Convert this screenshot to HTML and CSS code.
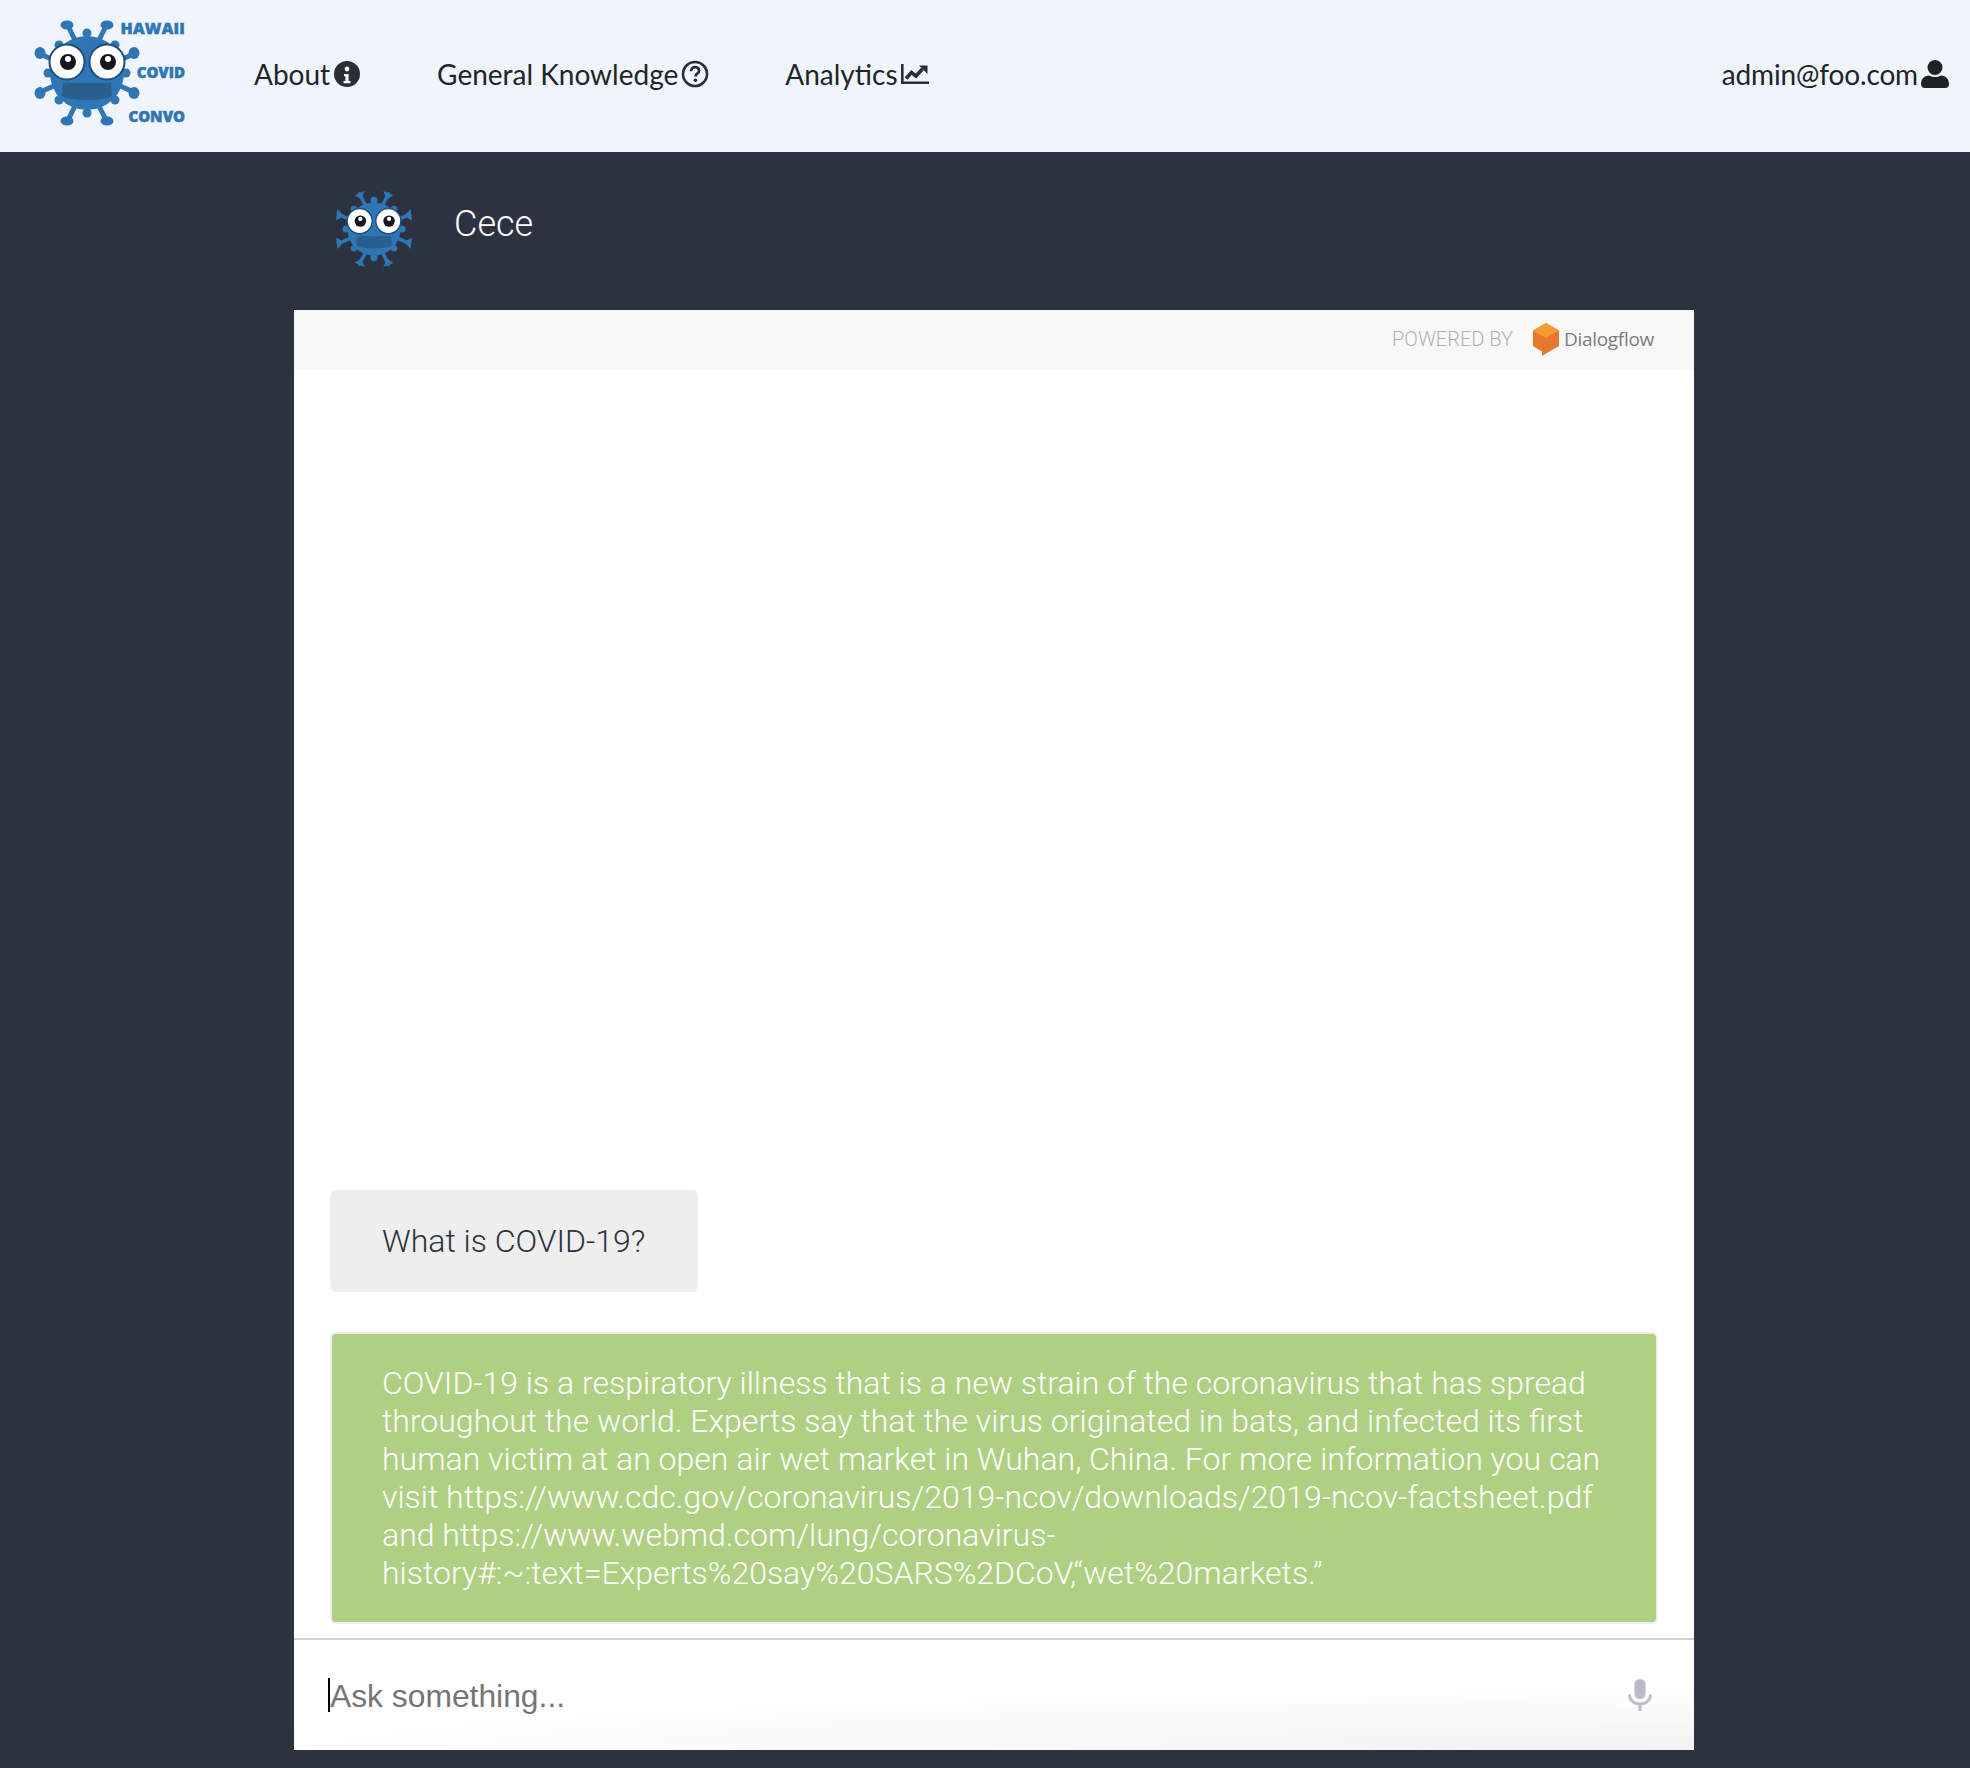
FILE: index.html
```html
<!DOCTYPE html>
<html lang="en">
<head>
<meta charset="utf-8">
<title>Hawaii COVID Convo</title>
<link rel="stylesheet" href="styles.css">
</head>
<body>
<svg class="defs" width="0" height="0" aria-hidden="true">
  <defs>
    <g id="virus-face">
      <circle cx="53" cy="53" r="37" fill="#2f76b5"/>
      <circle cx="33" cy="42" r="17.500" fill="#fff" stroke="#1d4f78" stroke-width="2"/>
      <circle cx="73" cy="42" r="17.500" fill="#fff" stroke="#1d4f78" stroke-width="2"/>
      <circle cx="34" cy="42" r="8" fill="#15171c"/>
      <circle cx="74" cy="42" r="8" fill="#15171c"/>
      <circle cx="34" cy="39" r="3" fill="#fff"/>
      <circle cx="74" cy="39" r="3" fill="#fff"/>
      <path d="M29 63 77 63 78 76Q72 80 53 80T28 76z" fill="#2a5f8c"/>
    </g>
    <g id="virus-arms" stroke="#2f76b5" stroke-width="5" fill="none" stroke-linecap="round">
      <path d="M33 4 43 24M73 4 63 24M53 13V24M4 33 22 41M102 33 84 41M4 73 22 65M102 73 84 65M33 102 43 82M73 102 63 82M53 93V82M14 53H20M92 53H86M25 25 30 30M81 25 76 30M25 80 30 76M81 80 76 76"/>
    </g>
    <symbol id="virus-round" viewBox="0 0 106 106">
      <use href="#virus-arms"/>
      <g fill="#2f76b5">
        <ellipse cx="33" cy="5" rx="6.500" ry="4.500"/><ellipse cx="73" cy="5" rx="6.500" ry="4.500"/>
        <circle cx="53" cy="13" r="4.500"/><ellipse cx="6" cy="33" rx="5.500" ry="6"/><ellipse cx="100" cy="33" rx="5.500" ry="6"/>
        <ellipse cx="6" cy="73" rx="5.500" ry="6"/><ellipse cx="100" cy="73" rx="5.500" ry="6"/><ellipse cx="33" cy="101" rx="6.500" ry="4.500"/>
        <ellipse cx="73" cy="101" rx="6.500" ry="4.500"/><circle cx="53" cy="93" r="4.500"/><circle cx="14" cy="53" r="4.500"/>
        <circle cx="92" cy="53" r="4.500"/><circle cx="25" cy="25" r="4.500"/><circle cx="81" cy="25" r="4.500"/>
        <circle cx="25" cy="80" r="4.500"/><circle cx="81" cy="80" r="4.500"/>
      </g>
      <use href="#virus-face"/>
    </symbol>
    <symbol id="virus-flared" viewBox="0 0 106 106">
      <use href="#virus-arms"/>
      <g fill="#2f76b5">
        <path d="M26 6 40 0 35 12zM80 6 66 0 71 12zM2 25 0 41 11 35zM104 25 106 41 95 35zM2 81 0 65 11 71zM104 81 106 65 95 71zM26 100 40 106 35 94zM80 100 66 106 71 94z"/>
        <circle cx="53" cy="13" r="5"/><circle cx="53" cy="93" r="5"/><circle cx="14" cy="53" r="5"/>
        <circle cx="92" cy="53" r="5"/><circle cx="25" cy="25" r="4.500"/><circle cx="81" cy="25" r="4.500"/>
        <circle cx="25" cy="80" r="4.500"/><circle cx="81" cy="80" r="4.500"/>
      </g>
      <use href="#virus-face"/>
    </symbol>
  </defs>
</svg>

<nav class="navbar">
  <a class="brand" href="#">
    <svg class="brand-virus"><use href="#virus-round"/></svg>
    <span class="brand-text">
      <span class="brand-hawaii">HAWAII</span>
      <span>COVID</span>
      <span>CONVO</span>
    </span>
  </a>
  <ul class="nav-links">
    <li class="nav-item">About
      <svg class="nav-icon" viewBox="0 0 28 28"><path fill="#2b2e33" fill-rule="evenodd" d="M14 1a13 13 0 1 0 0 26 13 13 0 0 0 0-26zm0 5.600a2.400 2.400 0 1 1 0 4.800 2.400 2.400 0 0 1 0-4.800zm-3 7.400h4.600v7H17.500v2.200h-7V21h1.900v-4.800h-1.400z"/></svg>
    </li>
    <li class="nav-item">General Knowledge
      <svg class="nav-icon" viewBox="0 0 28 28"><circle cx="14" cy="14" r="12" fill="none" stroke="#2b2e33" stroke-width="2.600"/><path d="M10 11.200c0-2.500 1.800-4 4.100-4 2.200 0 4 1.400 4 3.500 0 3-3.600 3-3.600 5.800" fill="none" stroke="#2b2e33" stroke-width="2.800"/><circle cx="14.400" cy="20.300" r="1.800" fill="#2b2e33"/></svg>
    </li>
    <li class="nav-item">Analytics
      <svg class="nav-icon nav-icon-chart" viewBox="0 0 28 22"><path d="M1.300 1v18.700H28" fill="none" stroke="#2b2e33" stroke-width="2.600"/><path d="M5 15.500 10.500 9.500 15 13 21.500 6" fill="none" stroke="#2b2e33" stroke-width="3.600"/><path d="M18 2.500h8.500V11z" fill="#2b2e33"/></svg>
    </li>
  </ul>
  <div class="nav-user">admin@foo.com
    <svg class="nav-icon" viewBox="0 0 28 28"><circle cx="14" cy="7.500" r="7.500" fill="#1f2125"/><path d="M0 24c0-5 3.500-8.500 8-8.500 2 1 4 1.500 6 1.500s4-.5 6-1.500c4.500 0 8 3.500 8 8.500 0 2.500-1.500 4-3.500 4h-21C1.500 28 0 26.500 0 24z" fill="#1f2125"/></svg>
  </div>
</nav>

<main class="chat">
  <header class="chat-title">
    <svg class="title-virus"><use href="#virus-flared"/></svg>
    <span class="title-name">Cece</span>
  </header>
  <div class="powered">
    <span class="powered-label">POWERED BY</span>
    <svg class="df-logo" viewBox="0 0 26 34">
      <path d="M13 0 26 7.500V23L13 30.500 9 33V28.500L0 23V7.500z" fill="#e5782b"/>
      <path d="M13 0 26 7.500 13 15 0 7.500z" fill="#f39c33"/>
    </svg>
    <span class="df-name">Dialogflow</span>
  </div>
  <section class="messages">
    <div class="bubble bubble-user">What is COVID-19?</div>
    <div class="bubble bubble-bot">COVID-19 is a respiratory illness that is a new strain of the coronavirus that has spread throughout the world. Experts say that the virus originated in bats, and infected its first human victim at an open air wet market in Wuhan, China. For more information you can visit https://www.cdc.gov/coronavirus/2019-ncov/downloads/2019-ncov-factsheet.pdf and https://www.webmd.com/lung/coronavirus-history#:~:text=Experts%20say%20SARS%2DCoV,“wet%20markets.”</div>
  </section>
  <footer class="ask">
    <span class="caret"></span>
    <span class="ask-text">Ask something...</span>
    <svg class="mic" viewBox="0 0 24 32"><rect x="6.500" y="0" width="11" height="20" rx="5.500" fill="#b9bcc6"/><path d="M1.500 15.500c0 6 4.500 9.500 10.500 9.500s10.500-3.500 10.500-9.500" fill="none" stroke="#b9bcc6" stroke-width="2.800"/><rect x="10.500" y="25" width="3" height="7" fill="#b9bcc6"/></svg>
  </footer>
</main>
</body>
</html>
```
FILE: styles.css
```css
* { box-sizing: border-box; }
html, body { margin: 0; padding: 0; }
body {
  height: 1768px;
  background: #2d3240;
  font-family: Roboto, "Liberation Sans", sans-serif;
  overflow: hidden;
}
.defs { position: absolute; }
.navbar {
  height: 152px;
  background: #f0f4fc;
  display: flex;
  align-items: center;
  padding: 0 21px 5px 34px;
  font-family: Lato, "Liberation Sans", sans-serif;
  font-size: 28px;
  color: #212529;
}
.brand {
  display: flex;
  width: 220px;
  height: 152px;
  margin-bottom: -5px;
  align-items: flex-start;
  text-decoration: none;
}
.brand-virus { width: 106px; height: 106px; margin-top: 20px; flex: none; }
.brand-text {
  width: 65px;
  margin-left: -20px;
  margin-top: 18px;
  display: flex;
  flex-direction: column;
  align-items: flex-end;
  gap: 23px;
  font-family: "Open Sans", sans-serif;
  font-weight: 800;
  font-size: 15px;
  line-height: 21px;
  color: #2f76b5;
  -webkit-text-stroke: 0.5px #2f76b5;
  flex: none;
}
.brand-hawaii { font-size: 16px; letter-spacing: 0.2px; }
.nav-links {
  list-style: none;
  margin: 0;
  padding: 0;
  display: flex;
  gap: 76px;
  flex: 1;
}
.nav-item, .nav-user { display: flex; align-items: center; gap: 3px; height: 34px; }
.nav-user { letter-spacing: -0.15px; }
.nav-icon { width: 28px; height: 28px; flex: none; }
.nav-icon-chart { height: 22px; }
.chat {
  width: 1400px;
  margin-left: 294px;
  height: 1598px;
  display: flex;
  flex-direction: column;
}
.chat-title {
  height: 158px;
  display: flex;
  align-items: center;
  padding-left: 42px;
  flex: none;
}
.title-virus { width: 76px; height: 76px; margin-bottom: 4px; }
.title-name {
  margin-left: 42px;
  margin-bottom: 14px;
  font-weight: 300;
  font-size: 36px;
  color: #fff;
}
.powered {
  height: 60px;
  background: #f8f8f8;
  display: flex;
  align-items: center;
  padding: 0 40px 3px 0;
  justify-content: flex-end;
  flex: none;
}
.powered-label { font-weight: 300; font-size: 20px; color: #aeb1bb; margin-right: 20px; }
.df-logo { width: 26px; height: 34px; margin-top: 2px; }
.df-name { font-family: "Open Sans", sans-serif; font-size: 19px; color: #7d7d7d; margin-left: 5px; letter-spacing: -0.3px; }
.messages {
  flex: 1;
  background: #fff;
  display: flex;
  flex-direction: column;
  justify-content: flex-end;
  align-items: flex-start;
  gap: 40px;
  padding: 0 36px 14px;
  min-height: 0;
}
.bubble {
  font-size: 32px;
  font-weight: 300;
  line-height: 38px;
  border-radius: 6px;
}
.bubble-user { background: #eee; color: #2d3240; padding: 32px 53px 32px 52px; }
.bubble-bot {
  background: #afd082;
  color: #fff;
  width: 1328px;
  border: 2px solid #eee;
  padding: 30px 50px 30px 50px;
}
.ask {
  height: 112px;
  border-top: 2px solid #d3d3d3;
  background: radial-gradient(ellipse 1500px 64px at 100% 100%, #f2f2f2, #fff);
  display: flex;
  align-items: center;
  padding: 0 42px 0 34px;
  flex: none;
}
.caret { width: 2px; height: 34px; background: #000; flex: none; }
.ask-text {
  flex: 1;
  padding-top: 2px;
  font-family: "Liberation Sans", Arial, sans-serif;
  font-size: 31.8px;
  color: #757575;
}
.mic { width: 24px; height: 32px; flex: none; }
```
